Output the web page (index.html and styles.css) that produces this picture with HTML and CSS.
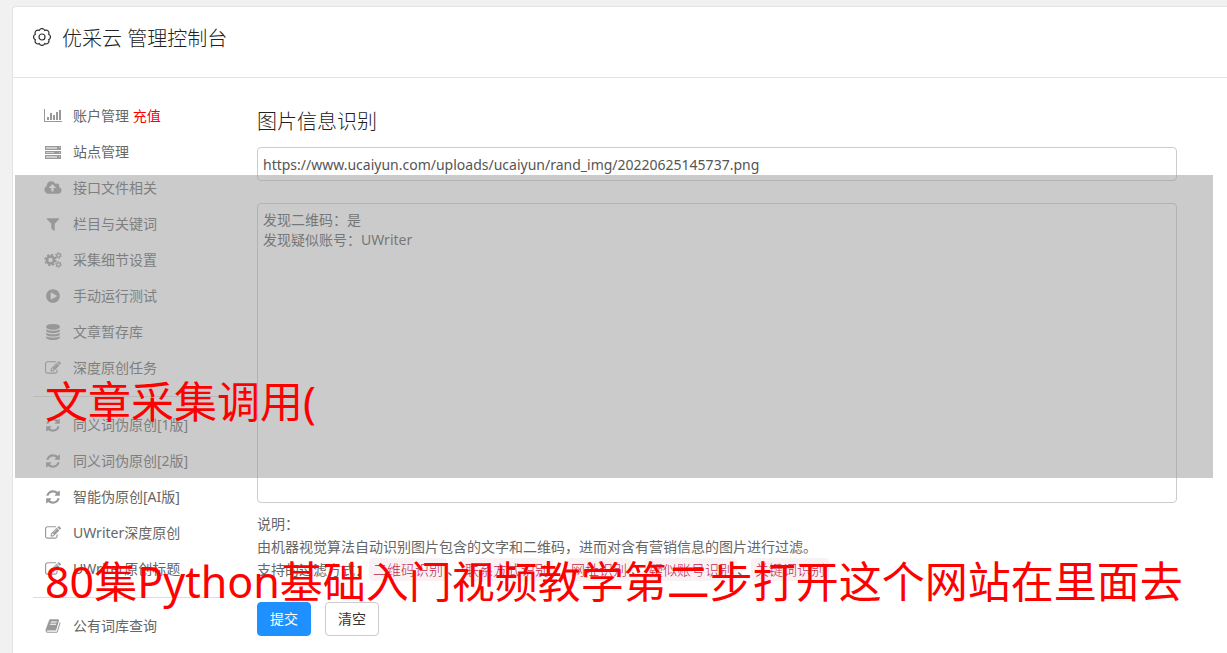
FILE: index.html
```html
<!DOCTYPE html>
<html lang="zh-CN">
<head>
    <meta charset="UTF-8">
    <meta name="viewport" content="width=device-width, initial-scale=1.0">
    <title>优采云 管理控制台</title>
    <link rel="stylesheet" href="styles.css">
</head>
<body>
    <!-- icon set -->
    <svg class="symbols" aria-hidden="true">
        <symbol id="i-chart" viewBox="0 0 18 16">
            <path d="M0 1h1v12h17v1H0zM3 9h2v3H3zM6 5h2v7H6zM9 7h2v5H9zM12 4h2v8h-2zM15 2h2v10h-2z"/>
        </symbol>
        <symbol id="i-server" viewBox="0 0 18 16">
            <path fill-opacity=".5" d="M1 2h16v4H1zM1 7h16v3H1zM1 11h16v4H1z"/>
            <path fill-rule="evenodd" d="M1 2h16v4H1zM2 3v2h11V3zM15 3v1h1V3zM1 7h16v3H1zM2 8v1h8V8zM15 8v1h1V8zM1 11h16v4H1zM2 12v2h11v-2zM15 12v1h1v-1z"/>
        </symbol>
        <symbol id="i-cloud" viewBox="-64 0 1920 1792">
            <path d="M1216 864q0-14-9-23l-352-352q-9-9-23-9t-23 9l-351 351q-10 12-10 24 0 14 9 23t23 9h224v352q0 13 9.500 22.500t22.500 9.500h192q13 0 22.500-9.500t9.500-22.500v-352h224q13 0 22.500-9.500t9.500-22.500zm640 288q0 159-112.500 271.500t-271.500 112.500h-1088q-185 0-316.500-131.500t-131.500-316.500q0-130 70-240t188-165q-2-30-2-43 0-212 150-362t362-150q156 0 285.500 87t188.500 231q71-62 166-62 106 0 181 75t75 181q0 76-41 138 130 31 213.500 135.500t83.500 238.500z"/>
        </symbol>
        <symbol id="i-filter" viewBox="0 0 1792 1792">
            <path d="M1595 295q17 41-14 70l-493 493v742q0 42-39 59-13 5-25 5-27 0-45-19l-256-256q-19-19-19-45v-486l-493-493q-31-29-14-70 17-39 59-39h1280q42 0 59 39z"/>
        </symbol>
        <symbol id="i-cogs" viewBox="0 0 18 16">
            <g fill="none" stroke="currentColor">
                <circle cx="6.500" cy="8" r="3.500" stroke-width="2.600"/>
                <circle cx="6.500" cy="8" r="5.300" stroke-width="1.800" stroke-dasharray="2.200 1.963"/>
                <circle cx="14.500" cy="3.500" r="1.800" stroke-width="1.300"/>
                <circle cx="14.500" cy="3.500" r="2.700" stroke-width="1.200" stroke-dasharray="1.400 1.427"/>
                <circle cx="14.500" cy="12.500" r="1.800" stroke-width="1.300"/>
                <circle cx="14.500" cy="12.500" r="2.700" stroke-width="1.200" stroke-dasharray="1.400 1.427"/>
            </g>
        </symbol>
        <symbol id="i-play" viewBox="0 0 1792 1792">
            <path d="M896 128q209 0 385.500 103t279.500 279.500 103 385.500-103 385.500-279.500 279.500-385.500 103-385.500-103-279.500-279.500-103-385.500 103-385.500 279.500-279.500 385.500-103zm384 823q32-18 32-55t-32-55l-544-320q-31-19-64-1-32 19-32 56v640q0 37 32 56 16 8 32 8 17 0 32-9z"/>
        </symbol>
        <symbol id="i-database" viewBox="0 0 1792 1792">
            <path d="M896 768q237 0 443-43t325-127v170q0 69-103 128t-280 93.500-385 34.500-385-34.500-280-93.500-103-128v-170q119 84 325 127t443 43zm0 768q237 0 443-43t325-127v170q0 69-103 128t-280 93.500-385 34.500-385-34.500-280-93.500-103-128v-170q119 84 325 127t443 43zm0-384q237 0 443-43t325-127v170q0 69-103 128t-280 93.500-385 34.500-385-34.500-280-93.500-103-128v-170q119 84 325 127t443 43zm0-1152q208 0 385 34.500t280 93.500 103 128v128q0 69-103 128t-280 93.500-385 34.500-385-34.500-280-93.500-103-128v-128q0-69 103-128t280-93.500 385-34.500z"/>
        </symbol>
        <symbol id="i-edit" viewBox="0 0 1792 1792">
            <path d="M888 1184l116-116-152-152-116 116v56h96v96h56zm440-720q-16-16-33 1l-350 350q-17 17-1 33t33-1l350-350q17-17 1-33zm80 594v190q0 119-84.500 203.500t-203.500 84.500h-832q-119 0-203.500-84.500t-84.500-203.500v-832q0-119 84.500-203.500t203.500-84.500h832q63 0 117 25 15 7 18 23 3 17-9 29l-49 49q-14 14-32 8-23-6-45-6h-832q-66 0-113 47t-47 113v832q0 66 47 113t113 47h832q66 0 113-47t47-113v-126q0-13 9-22l64-64q15-15 35-7t20 29zm-96-738l288 288-672 672h-288v-288zm444 132l-92 92-288-288 92-92q28-28 68-28t68 28l152 152q28 28 28 68t-28 68z"/>
        </symbol>
        <symbol id="i-refresh" viewBox="0 0 1792 1792">
            <path d="M1639 1056q0 5-1 7-64 268-268 434.500t-478 166.500q-146 0-282.500-55t-243.500-157l-129 129q-19 19-45 19t-45-19-19-45v-448q0-26 19-45t45-19h448q26 0 45 19t19 45-19 45l-137 137q71 66 161 102t187 36q134 0 250-65t186-179q11-17 53-117 8-23 30-23h192q13 0 22.500 9.500t9.500 22.500zm25-800v448q0 26-19 45t-45 19h-448q-26 0-45-19t-19-45 19-45l138-138q-148-137-349-137-134 0-250 65t-186 179q-11 17-53 117-8 23-30 23h-199q-13 0-22.500-9.500t-9.500-22.500v-7q65-268 270-434.500t480-166.500q146 0 284 55.500t245 156.500l130-129q19-19 45-19t45 19 19 45z"/>
        </symbol>
        <symbol id="i-book" viewBox="0 0 1792 1792">
            <path d="M1703 478q40 57 18 129l-275 906q-19 64-76.500 107.500t-122.500 43.500h-923q-77 0-148.500-53.500t-99.500-131.500q-24-67-2-127 0-4 3-27t4-37q1-8-3-21.500t-3-19.500q2-11 8-21t16.500-23.500 16.500-23.500q23-38 45-91.500t30-91.500q3-10 .5-30t-.5-28q3-11 17-28t17-23q21-36 42-92t25-90q1-9-2.500-32t.5-28q4-13 22-30.500t22-22.500q19-26 42.500-84.500t27.500-96.500q1-8-3-25.500t-2-26.500q2-8 9-18t18-23 17-21q8-12 16.500-30.500t15-35 16-36 19.500-32 26.500-23.500 36-11.500 47.500 5.500l-1 3q38-9 51-9h761q74 0 114 56t18 130l-274 906q-36 119-71.500 153.500t-128.500 34.500h-869q-27 0-38 15-11 16-1 43 24 70 144 70h923q29 0 56-15.500t35-41.500l300-987q7-22 5-57 38 15 59 43zm-1064 2q-4 13 2 22.500t20 9.500h608q13 0 25.500-9.500t16.500-22.500l21-64q4-13-2-22.500t-20-9.500h-608q-13 0-25.500 9.500t-16.500 22.500zm-83 256q-4 13 2 22.500t20 9.500h608q13 0 25.500-9.500t16.500-22.500l21-64q4-13-2-22.500t-20-9.500h-608q-13 0-25.500 9.500t-16.500 22.500z"/>
        </symbol>
    </svg>

    <div class="panel">
        <header class="panel-header">
            <svg class="gear" viewBox="0 0 18 18" aria-hidden="true">
                <path d="M15.600 11.700A2.900 2.900 0 0 1 11.700 15.600A2.900 2.900 0 0 1 6.300 15.600A2.900 2.900 0 0 1 2.400 11.700A2.900 2.900 0 0 1 2.400 6.300A2.900 2.900 0 0 1 6.300 2.400A2.900 2.900 0 0 1 11.700 2.400A2.900 2.900 0 0 1 15.600 6.300A2.900 2.900 0 0 1 15.600 11.700Z"/>
                <circle cx="9" cy="9" r="3"/>
            </svg>
            <h1>优采云 管理控制台</h1>
        </header>

        <div class="panel-body">
            <nav class="sidebar">
                <a href="#"><svg><use href="#i-chart"/></svg><span>账户管理 <span class="recharge">充值</span></span></a>
                <a href="#"><svg><use href="#i-server"/></svg>站点管理</a>
                <a href="#"><svg><use href="#i-cloud"/></svg>接口文件相关</a>
                <a href="#"><svg><use href="#i-filter"/></svg>栏目与关键词</a>
                <a href="#"><svg><use href="#i-cogs"/></svg>采集细节设置</a>
                <a href="#"><svg><use href="#i-play"/></svg>手动运行测试</a>
                <a href="#"><svg><use href="#i-database"/></svg>文章暂存库</a>
                <a href="#"><svg><use href="#i-edit"/></svg>深度原创任务</a>
                <hr>
                <a href="#"><svg><use href="#i-refresh"/></svg>同义词伪原创[1版]</a>
                <a href="#"><svg><use href="#i-refresh"/></svg>同义词伪原创[2版]</a>
                <a href="#"><svg><use href="#i-refresh"/></svg>智能伪原创[AI版]</a>
                <a href="#"><svg><use href="#i-edit"/></svg>UWriter深度原创</a>
                <a href="#"><svg><use href="#i-edit"/></svg>UWriter原创标题</a>
                <hr>
                <a href="#"><svg><use href="#i-book"/></svg>公有词库查询</a>
            </nav>

            <main class="content">
                <h2><label for="imgUrl">图片信息识别</label></h2>
                <form id="imageForm">
                    <input type="text" id="imgUrl" name="imgUrl" value="https://www.ucaiyun.com/uploads/ucaiyun/rand_img/20220625145737.png">
                    <textarea id="result" name="result" aria-label="识别结果">发现二维码：是
发现疑似账号：UWriter</textarea>
                    <div class="help">
                        <p>说明：</p>
                        <p>由机器视觉算法自动识别图片包含的文字和二维码，进而对含有营销信息的图片进行过滤。</p>
                        <p>支持的过滤方式：<code>二维码识别</code>、<code>联系方式识别</code>、<code>网址识别</code>、<code>疑似账号识别</code>、<code>关键词识别</code></p>
                    </div>
                    <div class="actions">
                        <button type="submit" class="btn btn-primary">提交</button>
                        <button type="reset" class="btn">清空</button>
                    </div>
                </form>
            </main>
        </div>
    </div>

    <div class="shade"></div>
    <div class="caption">
        <p>文章采集调用(</p>
        <p>80集Python基础入门视频教学第二步打开这个网站在里面去</p>
    </div>
</body>
</html>
```

FILE: styles.css
```css
* {
    box-sizing: border-box;
}

body {
    position: relative;
    margin: 0;
    padding: 6px 0 0 12px;
    min-height: 100vh;
    display: flex;
    flex-direction: column;
    overflow-x: hidden;
    font-family: "Noto Sans", "Noto Sans CJK SC", sans-serif;
    font-size: 14px;
    line-height: 20px;
    color: #666;
    background-color: #f1f1f1;
}

h1, h2, p {
    margin: 0;
}

.symbols {
    position: absolute;
    width: 0;
    height: 0;
}

.panel {
    flex: 1;
    background: #fff;
    border: 1px solid #e3e3e3;
    border-width: 1px 0 0 1px;
    border-radius: 4px 0 0 0;
}

.panel-header {
    display: flex;
    align-items: flex-start;
    gap: 11px;
    padding: 17px 20px 23px;
    border-bottom: 1px solid #e3e3e3;
}

.panel-header h1 {
    font-size: 20px;
    font-weight: 300;
    line-height: 30px;
    color: #222;
}

.gear {
    width: 18px;
    height: 18px;
    margin-top: 4px;
    fill: none;
    stroke: #333;
    stroke-width: 1.2;
}

.panel-body {
    display: flex;
    gap: 35px;
    padding: 20px 50px 0 20px;
}

.sidebar {
    flex: 0 0 189px;
}

.sidebar a {
    display: flex;
    align-items: center;
    gap: 11px;
    height: 36px;
    padding-left: 11px;
    color: #666;
    text-decoration: none;
}

.sidebar svg {
    width: 18px;
    height: 16px;
    color: #999;
    fill: #999;
}

.sidebar hr {
    margin: 10px 0;
    border: 0;
    border-top: 1px solid #ddd;
}

.sidebar .recharge {
    color: #f00;
}

.content {
    flex: 1;
    min-width: 0;
    padding-top: 9px;
}

h2 {
    margin-bottom: 10px;
    font-size: 20px;
    font-weight: 300;
    line-height: 30px;
    color: #222;
}

input, textarea {
    display: block;
    width: 100%;
    padding: 6px 5px;
    border: 1px solid #ccc;
    border-radius: 4px;
    background: #fff;
    color: #555;
    font: inherit;
}

input {
    height: 34px;
    margin-bottom: 22px;
}

textarea {
    height: 300px;
    margin-bottom: 9px;
    resize: none;
}

.help p {
    line-height: 23px;
}

code {
    padding: 2px 4px;
    border-radius: 4px;
    background: #f9f2f4;
    color: #c7254e;
    font-family: inherit;
    font-weight: 300;
}

.actions {
    display: flex;
    gap: 14px;
    margin-top: 21px;
}

.btn {
    padding: 6px 12px;
    border: 1px solid #ccc;
    border-radius: 4px;
    background: #fff;
    color: #333;
    font: inherit;
    cursor: pointer;
}

.btn-primary {
    border-color: #1e90ff;
    background: #1e90ff;
    color: #fff;
}

/* grey band and red caption lying over the page */
.shade {
    position: absolute;
    top: 175px;
    left: 15px;
    right: 14px;
    height: 303px;
    background: rgba(151, 151, 151, 0.5);
    pointer-events: none;
}

.caption {
    position: absolute;
    top: 372px;
    left: 45px;
    display: flex;
    flex-direction: column;
    gap: 120px;
    color: #f00;
    font-size: 43px;
    line-height: 60px;
    white-space: nowrap;
    pointer-events: none;
}
```
